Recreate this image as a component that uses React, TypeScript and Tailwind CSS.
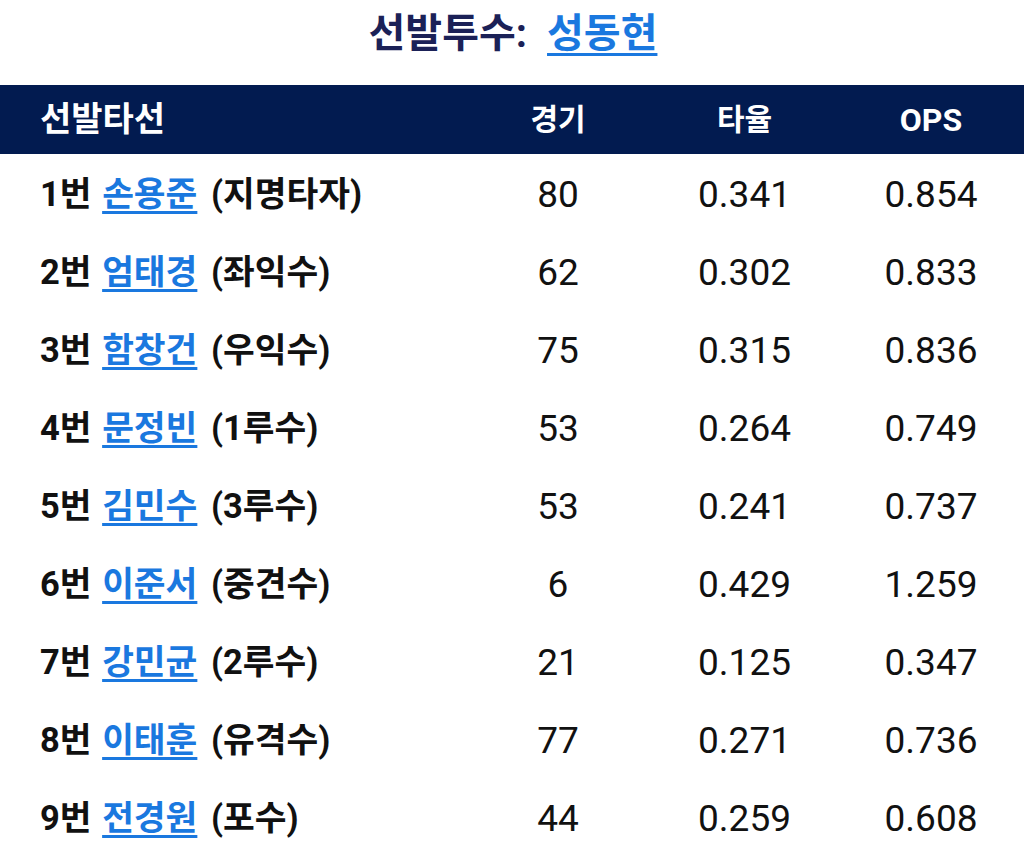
import React from 'react';

type Batter = { order: number; name: string; pos: string; games: string; avg: string; ops: string };

const lineup: Batter[] = [
  { order: 1, name: '손용준', pos: '지명타자', games: '80', avg: '0.341', ops: '0.854' },
  { order: 2, name: '엄태경', pos: '좌익수', games: '62', avg: '0.302', ops: '0.833' },
  { order: 3, name: '함창건', pos: '우익수', games: '75', avg: '0.315', ops: '0.836' },
  { order: 4, name: '문정빈', pos: '1루수', games: '53', avg: '0.264', ops: '0.749' },
  { order: 5, name: '김민수', pos: '3루수', games: '53', avg: '0.241', ops: '0.737' },
  { order: 6, name: '이준서', pos: '중견수', games: '6', avg: '0.429', ops: '1.259' },
  { order: 7, name: '강민균', pos: '2루수', games: '21', avg: '0.125', ops: '0.347' },
  { order: 8, name: '이태훈', pos: '유격수', games: '77', avg: '0.271', ops: '0.736' },
  { order: 9, name: '전경원', pos: '포수', games: '44', avg: '0.259', ops: '0.608' },
];

export default function App() {
  return (
    <div className="w-[1024px] h-[842px] overflow-hidden bg-white font-['Roboto','Noto_Sans_CJK_KR',sans-serif]">
      <div className="h-[85px] flex items-center justify-center pb-[18px] pl-[2px] text-[40px] font-bold text-[#1b2157]">
        <span>선발투수:</span>
        <a className="ml-[20px] text-[#1a78df] underline decoration-[3px] underline-offset-[6px]">성동현</a>
      </div>
      <table className="w-full border-collapse">
        <thead>
          <tr className="h-[69px] bg-[#021b50] text-white font-bold">
            <th className="text-left pl-[40px] w-[465px] text-[34px]">선발타선</th>
            <th className="w-[186px] text-center text-[30px]">경기</th>
            <th className="w-[187px] text-center text-[30px]">타율</th>
            <th className="text-center text-[32px]">OPS</th>
          </tr>
        </thead>
        <tbody>
          {lineup.map((b) => (
            <tr key={b.order} className="h-[78px] text-[37px] text-[#111]">
              <td className="pl-[40px] pt-[3px] text-[34.5px] font-bold whitespace-nowrap">
                {b.order}번{' '}
                <a className="ml-[2px] mr-[5px] text-[#1a78df] underline decoration-[3px] underline-offset-[5px]">{b.name}</a>{' '}
                ({b.pos})
              </td>
              <td className="text-center pt-[3px]">{b.games}</td>
              <td className="text-center pt-[3px]">{b.avg}</td>
              <td className="text-center pt-[3px]">{b.ops}</td>
            </tr>
          ))}
        </tbody>
      </table>
    </div>
  );
}
